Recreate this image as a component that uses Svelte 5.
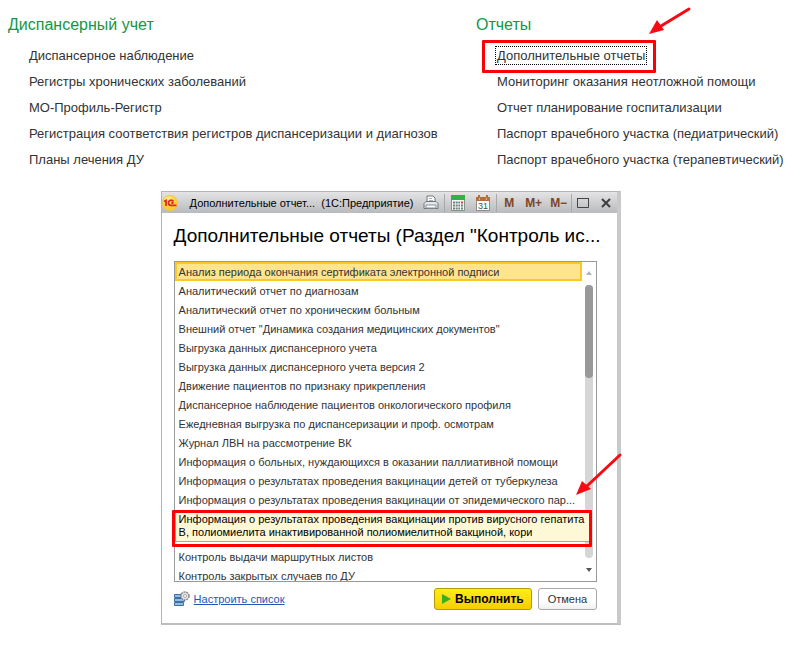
<script lang="ts">
	const sections = [
		{
			title: 'Диспансерный учет',
			links: [
				'Диспансерное наблюдение',
				'Регистры хронических заболеваний',
				'МО-Профиль-Регистр',
				'Регистрация соответствия регистров диспансеризации и диагнозов',
				'Планы лечения ДУ'
			]
		},
		{
			title: 'Отчеты',
			links: [
				'Дополнительные отчеты',
				'Мониторинг оказания неотложной помощи',
				'Отчет планирование госпитализации',
				'Паспорт врачебного участка (педиатрический)',
				'Паспорт врачебного участка (терапевтический)'
			]
		}
	];

	const marked = 'Дополнительные отчеты';
	const hint = 'Информация о результатах проведения вакцинации против вирусного гепатита В, полиомиелита инактивированной полиомиелитной вакциной, кори';

	const reports = [
		'Анализ периода окончания сертификата электронной подписи',
		'Аналитический отчет по диагнозам',
		'Аналитический отчет по хроническим больным',
		'Внешний отчет "Динамика создания медицинских документов"',
		'Выгрузка данных диспансерного учета',
		'Выгрузка данных диспансерного учета версия 2',
		'Движение пациентов по признаку прикрепления',
		'Диспансерное наблюдение пациентов онкологического профиля',
		'Ежедневная выгрузка по диспансеризации и проф. осмотрам',
		'Журнал ЛВН на рассмотрение ВК',
		'Информация о больных, нуждающихся в оказании паллиативной помощи',
		'Информация о результатах проведения вакцинации детей от туберкулеза',
		'Информация о результатах проведения вакцинации от эпидемического пар...',
		// the hint lies over these two rows
		'',
		'',
		'Контроль выдачи маршрутных листов',
		'Контроль закрытых случаев по ДУ'
	];

	let selected = $state(0);
</script>

<main>
	<nav class="sections">
		{#each sections as section}
			<section>
				<h2>{section.title}</h2>
				<ul>
					{#each section.links as link}
						<li>
							<a href="#report" class:focused={link === marked}>{link}</a>
							{#if link === marked}
								<span class="frame link-frame"></span>
								<svg class="arrow link-arrow" width="44" height="30" viewBox="0 0 44 30">
									<path d="M41 3 13 20" stroke="#f90a12" stroke-width="3" stroke-linecap="round" />
									<path d="M1 28 9 14l7 10z" fill="#f90a12" />
								</svg>
							{/if}
						</li>
					{/each}
				</ul>
			</section>
		{/each}
	</nav>

	<div class="window" role="dialog" aria-labelledby="dialog-title">
		<header>
			<svg class="logo" width="16" height="16" viewBox="0 0 16 16">
				<defs>
					<radialGradient id="gold" cx=".4" cy=".3"><stop stop-color="#fff3a0" /><stop offset="1" stop-color="#fbd02c" /></radialGradient>
				</defs>
				<circle cx="8" cy="8" r="7.5" fill="url(#gold)" stroke="#f3c83c" />
				<path d="M2 6.500 4 5.500V11M11.500 6.500C10 4.500 6.500 5 6.500 8c0 1.800 1.200 2.300 2.500 2.300h5.500M11.500 8H9.300" fill="none" stroke="#db2b20" stroke-width="1.800" />
			</svg>
			<span class="caption">Дополнительные отчет...&nbsp; (1С:Предприятие)</span>
			<div class="tools">
				<button class="tool wide" aria-label="Печать">
					<svg width="16" height="16" viewBox="0 0 16 16">
						<path d="M4 7V1h6l2 2v4" fill="#fff" stroke="#6b7680" />
						<path d="M1 8.500 3 6.500h10l2 2v5H1z" fill="#e3e8ec" stroke="#6b7680" />
						<path d="M3 10h10v3H3z" fill="#fff" stroke="#87919a" />
						<path d="M6 3.500h3M6 5.500h4" stroke="#aab2b8" />
					</svg>
				</button>
				<button class="tool wide split" aria-label="Калькулятор">
					<svg width="14" height="16" viewBox="0 0 14 16">
						<path d="M.5.500h13v15H.5z" fill="#f5f7f5" stroke="#83938b" />
						<path d="M0 0h14v5H0z" fill="#35b044" />
						<path d="M2 7.500h7M2 10.500h7M2 13.500h7" stroke="#6e827c" stroke-width="2" stroke-dasharray="2 .7" />
						<path d="M11 6.500v2" stroke="#e04339" stroke-width="2" />
						<path d="M11 9.500v5" stroke="#6e827c" stroke-width="2" stroke-dasharray="2 1" />
					</svg>
				</button>
				<button class="tool wide" aria-label="Календарь">
					<svg width="14" height="16" viewBox="0 0 14 16">
						<path d="M.5 2.500h13v13H.5z" fill="#fff" stroke="#8d8d8d" />
						<path d="M0 2h14v4H0z" fill="#b56f3d" />
						<path d="M3 0v4M11 0v4" stroke="#b56f3d" stroke-width="2" />
						<path d="M3 4h1M10 4h1" stroke="#fff" />
						<text x="7" y="14" text-anchor="middle" font-size="9" fill="#3d5062">31</text>
					</svg>
				</button>
				<button class="memory split">M</button>
				<button class="memory">M+</button>
				<button class="memory">M−</button>
				<button class="tool split" aria-label="Развернуть">
					<svg width="12" height="12" viewBox="0 0 12 12"><path d="M.5 1.500h11v9H.5zM0 1.500h12" fill="none" stroke="#444" /></svg>
				</button>
				<button class="tool" aria-label="Закрыть">
					<svg width="10" height="10" viewBox="0 0 10 10"><path d="m1 1 8 8M9 1 1 9" stroke="#3d3d3d" stroke-width="2" /></svg>
				</button>
			</div>
		</header>

		<div class="content">
			<h1 id="dialog-title">Дополнительные отчеты (Раздел "Контроль ис...</h1>

			<div class="list">
				<ul role="listbox" aria-label="Дополнительные отчеты">
					{#each reports as report, i}
						<li role="option" aria-selected={selected === i}>
							<button class="report" class:selected={selected === i} onclick={() => (selected = i)}>{report}</button>
						</li>
					{/each}
				</ul>
				<div class="scrollbar">
					<svg width="6" height="4" viewBox="0 0 6 4"><path d="M0 4h6L3 0z" fill="#b5b5b5" /></svg>
					<div class="track"><div class="thumb"></div></div>
					<svg width="6" height="4" viewBox="0 0 6 4"><path d="M0 0h6L3 4z" fill="#555" /></svg>
				</div>

				<div class="hint" role="tooltip">{hint}</div>
				<span class="frame hint-frame"></span>
				<svg class="arrow hint-arrow" width="48" height="46" viewBox="0 0 48 46">
					<path d="M45 3 12 34" stroke="#f90a12" stroke-width="3" stroke-linecap="round" />
					<path d="m1 43 6-14 9 8z" fill="#f90a12" />
				</svg>
			</div>

			<footer>
				<svg width="16" height="16" viewBox="0 0 16 16">
					<path d="M.5 3.500h9v3h-9zM.5 7.500h10v3H.5zM.5 11.500h9v3h-9z" fill="#8dbce6" stroke="#426f9c" />
					<circle cx="11" cy="5" r="4" fill="#e6e6e6" stroke="#898989" stroke-width="1.500" stroke-dasharray="2 .8" />
					<circle cx="11" cy="5" r="1.500" fill="#fff" stroke="#aaa" />
				</svg>
				<a href="#settings">Настроить список</a>
				<button class="run">
					<svg width="9" height="10" viewBox="0 0 9 10"><path d="M0 0v10l9-5z" fill="#3fae1c" /></svg>
					Выполнить
				</button>
				<button class="cancel">Отмена</button>
			</footer>
		</div>
	</div>
</main>

<style>
	:global(body) {
		margin: 0;
		background: #fff;
	}

	main {
		font-family: "Liberation Sans", Arial, sans-serif;
		font-size: 13px;
		color: #333;
		padding: 13px 0 24px;
	}

	h1, h2, ul {
		margin: 0;
		padding: 0;
		font-weight: normal;
		list-style: none;
	}

	button {
		font: inherit;
		color: inherit;
		margin: 0;
	}

	svg {
		flex-shrink: 0;
	}

	.sections {
		display: grid;
		grid-template-columns: 468fr 332fr;
		padding-left: 8px;
	}

	.sections h2 {
		font-size: 16px;
		line-height: 24px;
		margin-bottom: 6px;
		color: #149646;
	}

	.sections ul {
		padding-left: 21px;
	}

	.sections li {
		position: relative;
		line-height: 26px;
		white-space: nowrap;
	}

	.sections a {
		color: inherit;
		text-decoration: none;
	}

	.sections a.focused {
		outline: 1px dotted #000;
		outline-offset: 1px;
	}

	.frame {
		position: absolute;
		border: 3px solid #fb0007;
		border-radius: 1px;
		pointer-events: none;
	}

	.arrow {
		position: absolute;
		fill: none;
		pointer-events: none;
	}

	.link-frame {
		left: -15px;
		top: -3px;
		width: 168px;
		height: 27px;
	}

	.link-arrow {
		left: 151px;
		top: -37px;
	}

	.window {
		box-sizing: border-box;
		width: 57%;
		margin: 18px 0 0 calc(20% - 1px);
		border: 1px solid #b4b4b4;
		border-right: 4px solid #c9c9cb;
		border-bottom: 2px solid #bdbdbd;
		background: #fff;
	}

	header {
		display: flex;
		align-items: center;
		height: 21px;
		background: linear-gradient(#e4e4e5, #b9babd);
		color: #000;
	}

	.caption {
		flex: 1;
		margin-left: 12px;
		font-size: 11px;
		white-space: nowrap;
	}

	.tools {
		display: flex;
		align-items: center;
	}

	.tool, .memory {
		display: flex;
		align-items: center;
		justify-content: center;
		width: 23px;
		height: 18px;
		padding: 0;
		border: 0;
		background: none;
	}

	.memory {
		width: 25px;
		font-size: 12px;
		font-weight: bold;
		color: #7d4525;
	}

	.wide {
		width: 26px;
	}

	.split {
		border-left: 1px solid #a9a9a9;
	}

	.content {
		padding: 10px 20px 13px 12px;
	}

	h1 {
		font-size: 19px;
		line-height: 26px;
		color: #000;
		white-space: nowrap;
	}

	.list {
		position: relative;
		display: flex;
		height: 319px;
		margin-top: 12px;
		border: 1px solid #999;
		font-size: 11px;
	}

	.list ul {
		flex: 1;
		min-width: 0;
		overflow: hidden;
	}

	.report {
		display: block;
		box-sizing: border-box;
		width: 100%;
		height: 19px;
		padding: 1px 0 0 2px;
		border: 2px solid transparent;
		background: none;
		line-height: 15px;
		text-align: left;
		white-space: nowrap;
	}

	.report.selected {
		border-color: #fbc926;
		background: #ffe48f;
	}

	.scrollbar {
		display: flex;
		flex-direction: column;
		align-items: center;
		gap: 10px;
		width: 14px;
		padding: 9px 0;
		box-sizing: border-box;
	}

	.track {
		flex: 1;
		width: 8px;
		border-radius: 4px;
		background: #d6d6d6;
	}

	.thumb {
		height: 34%;
		border-radius: 4px;
		background: #999;
	}

	.hint {
		position: absolute;
		left: 0;
		top: 248px;
		right: 4px;
		padding: 2px 0 2px 3px;
		border: 1px solid #a8a68c;
		background: #fff8d6;
		color: #000;
		line-height: 13px;
	}

	.hint-frame {
		left: -3px;
		right: 4px;
		top: 248px;
		height: 31px;
	}

	.hint-arrow {
		right: -27px;
		top: 190px;
	}

	footer {
		display: flex;
		align-items: center;
		gap: 6px;
		margin-top: 6px;
		font-size: 11px;
	}

	footer a {
		margin: 0 auto 0 -2px;
		color: #2158b8;
	}

	footer button {
		height: 22px;
		border-radius: 3px;
		padding: 0 9px;
	}

	.run {
		display: flex;
		align-items: center;
		gap: 4px;
		border: 1px solid #b59a00;
		background: linear-gradient(#ffec1a, #f5cf00);
		color: #000;
		font-size: 12px;
		font-weight: bold;
	}

	footer .run {
		padding: 0 7px;
	}

	.cancel {
		border: 1px solid #aaa;
		background: linear-gradient(#fff 60%, #f0f0f0);
	}
</style>
